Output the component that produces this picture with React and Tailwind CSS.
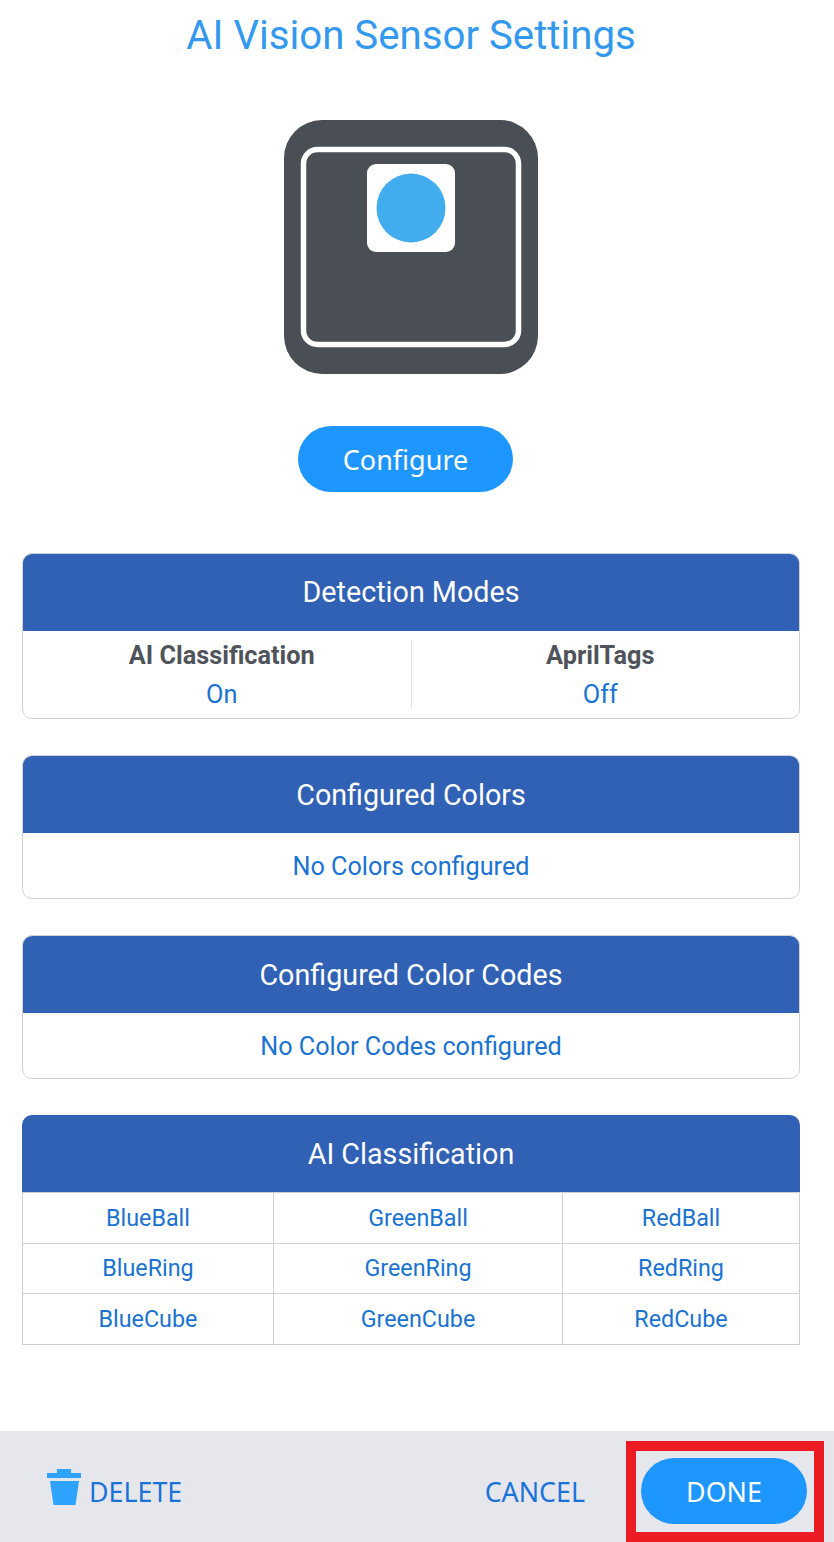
function Card({ title, children, square, low }) {
  return (
    <section className={`w-[778px] ${square ? "" : "border border-[#d2d2d2] rounded-[10px] overflow-hidden"}`}>
      <div className={`h-[77px] bg-[#3161b4] flex items-center justify-center text-white text-[28.7px] ${square ? "rounded-t-[10px]" : ""} ${square || low ? "pt-[2px]" : ""}`}>{title}</div>
      {children}
    </section>
  );
}
function Cell({ children, w, last, h }) {
  return (
    <div className={`${w} ${h} flex items-center justify-center text-[#1a73d0] text-[23.3px] border-[#d0d0d0] border-b border-l ${last ? "border-r" : ""}`}>{children}</div>
  );
}
const rows = [
  { h: "h-[51px]", c: ["BlueBall", "GreenBall", "RedBall"] },
  { h: "h-[50px]", c: ["BlueRing", "GreenRing", "RedRing"] },
  { h: "h-[51px]", c: ["BlueCube", "GreenCube", "RedCube"] },
];
export default function App() {
  return (
    <div className="relative h-[1542px] w-[834px] bg-white flex flex-col font-['Roboto',sans-serif] overflow-hidden">
      <main className="flex-1 w-[822px] flex flex-col items-center">
        <h1 className="h-[72px] flex items-center text-[40.2px] text-[#3399ee] font-normal">AI Vision Sensor Settings</h1>
        <svg className="mt-[48px] block" width="254" height="254" viewBox="0 0 254 254">
          <rect width="254" height="254" rx="38" fill="#4a4e55" />
          <rect x="19.5" y="29.5" width="215" height="195" rx="14" fill="none" stroke="#fff" strokeWidth="5.5" />
          <rect x="83" y="44" width="88" height="88" rx="9" fill="#fff" />
          <circle cx="127" cy="88" r="34.5" fill="#41adef" />
        </svg>
        <button className="mt-[52px] mr-[11px] w-[215px] h-[66px] pt-[2px] rounded-full bg-[#1e96ff] text-white text-[27px] font-['Noto_Sans',sans-serif]">Configure</button>
        <div className="mt-[61px] flex flex-col gap-[36px]">
          <Card title="Detection Modes">
            <div className="h-[87px] flex items-start pt-[9px]">
              <div className="flex-1 h-[70px] pt-[1px] pl-[10px] flex flex-col items-center justify-between">
                <span className="text-[25.3px] font-bold text-[#4f535a] leading-[30px]">AI Classification</span>
                <span className="text-[25.3px] text-[#1a73d0] leading-[30px]">On</span>
              </div>
              <div className="w-px h-[69px] bg-[#e3e3e3]" />
              <div className="flex-1 h-[70px] pt-[1px] pr-[10px] flex flex-col items-center justify-between">
                <span className="text-[25.3px] font-bold text-[#4f535a] leading-[30px]">AprilTags</span>
                <span className="text-[25.3px] text-[#1a73d0] leading-[30px]">Off</span>
              </div>
            </div>
          </Card>
          <Card title="Configured Colors" low>
            <div className="h-[65px] pt-[2px] flex items-center justify-center text-[25.2px] text-[#1a73d0]">No Colors configured</div>
          </Card>
          <Card title="Configured Color Codes" low>
            <div className="h-[65px] pt-[2px] flex items-center justify-center text-[25.2px] text-[#1a73d0]">No Color Codes configured</div>
          </Card>
          <Card title="AI Classification" square>
            <div className="border-t border-[#d0d0d0]">
              {rows.map((r) => (
                <div key={r.c[0]} className="flex">
                  <Cell w="w-[251px]" h={r.h}>{r.c[0]}</Cell>
                  <Cell w="w-[289px]" h={r.h}>{r.c[1]}</Cell>
                  <Cell w="w-[238px]" last h={r.h}>{r.c[2]}</Cell>
                </div>
              ))}
            </div>
          </Card>
        </div>
      </main>
      <footer className="h-[111px] bg-[#e6e7ec] flex items-center pt-[9px] font-['Noto_Sans',sans-serif] text-[#1a73d8] text-[26.8px] pl-[47px] pr-[27px]">
        <button className="flex items-center gap-[8px]">
          <svg width="34" height="36" viewBox="0 0 34 36" className="-mt-[8px]">
            <rect x="10" y="0" width="14" height="4" fill="#2ea3ff" />
            <rect x="0" y="4" width="34" height="5" fill="#2ea3ff" />
            <path d="M3 12h29l-3.5 24H6.5z" fill="#2ea3ff" />
          </svg>
          <span className="pt-[2px]">DELETE</span>
        </button>
        <button className="ml-auto pt-[2px]">CANCEL</button>
        <button className="ml-[56px] w-[166px] h-[66px] pt-[2px] rounded-full bg-[#1e96ff] text-white">DONE</button>
      </footer>
      <div className="absolute left-[626px] top-[1441px] w-[198px] h-[101px] border-[10px] border-[#ed1c24] pointer-events-none" />
    </div>
  );
}
